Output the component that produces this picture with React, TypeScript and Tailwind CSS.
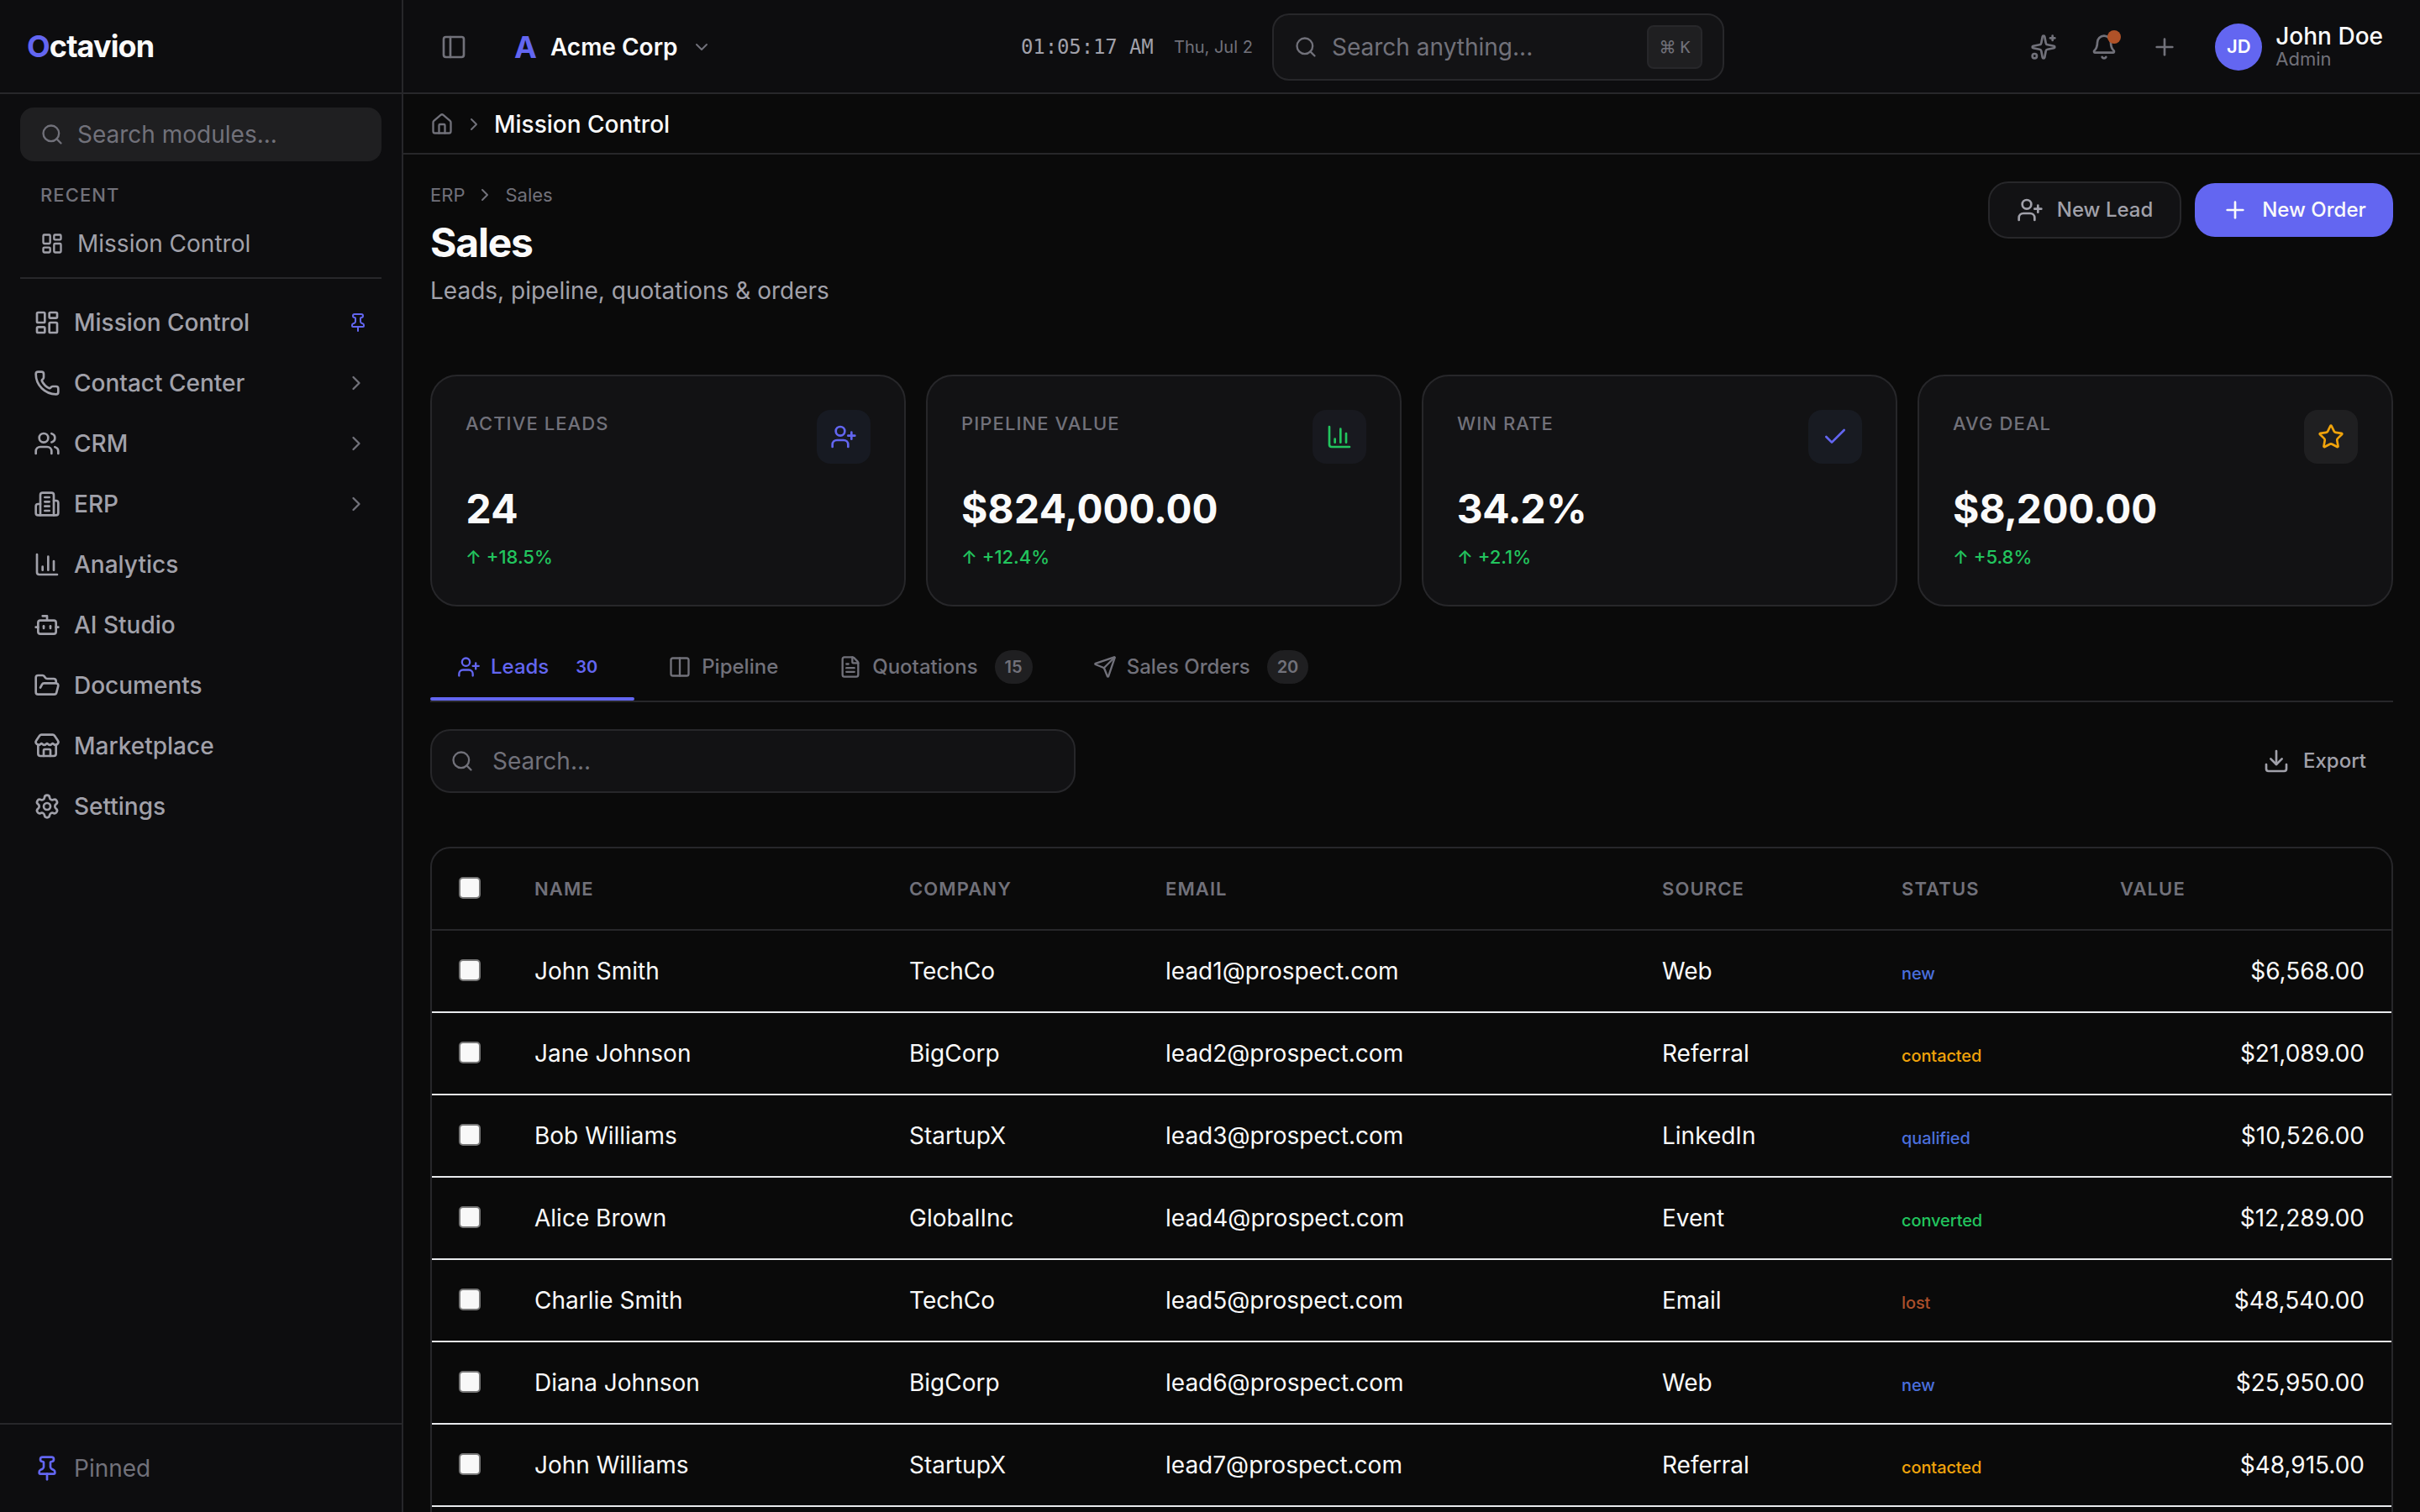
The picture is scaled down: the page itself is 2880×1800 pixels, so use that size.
import type { ReactNode } from "react";
import {
  Bell,
  Bot,
  ChartColumn,
  Check,
  ChevronDown,
  ChevronRight,
  Columns2,
  Download,
  FileText,
  FolderOpen,
  House,
  LayoutDashboard,
  PanelLeft,
  Phone,
  Pin,
  Plus,
  Search,
  Send,
  Settings,
  Sparkles,
  Star,
  Store,
  UserPlus,
  Users,
  type LucideIcon,
} from "lucide-react";

interface NavItem {
  label: string;
  icon: LucideIcon | typeof ErpIcon;
  expandable?: boolean;
  pinned?: boolean;
}

interface Stat {
  label: string;
  value: string;
  change: string;
  icon: LucideIcon;
  iconClass: string;
  tileClass: string;
}

interface Lead {
  name: string;
  company: string;
  email: string;
  source: string;
  status: keyof typeof statusColors;
  value: string;
}

const statusColors = {
  new: "text-[#4a6fdc]",
  contacted: "text-[#f0a30b]",
  qualified: "text-[#4a6fdc]",
  converted: "text-[#22c55e]",
  lost: "text-[#ac502b]",
};

function ErpIcon({ size = 24 }: { size?: number }) {
  return (
    <svg
      width={size}
      height={size}
      viewBox="0 0 24 24"
      fill="none"
      stroke="currentColor"
      strokeWidth={2}
      strokeLinecap="round"
      strokeLinejoin="round"
    >
      <path d="M6 22V4a2 2 0 0 1 2-2h8a2 2 0 0 1 2 2v18Z" />
      <path d="M6 12H4a2 2 0 0 0-2 2v6a2 2 0 0 0 2 2h2" />
      <path d="M18 9h2a2 2 0 0 1 2 2v9a2 2 0 0 1-2 2h-2" />
      <path d="M10 6h4M10 10h4M10 14h4M10 18h4" />
    </svg>
  );
}

const navItems: NavItem[] = [
  { label: "Mission Control", icon: LayoutDashboard, pinned: true },
  { label: "Contact Center", icon: Phone, expandable: true },
  { label: "CRM", icon: Users, expandable: true },
  { label: "ERP", icon: ErpIcon, expandable: true },
  { label: "Analytics", icon: ChartColumn },
  { label: "AI Studio", icon: Bot },
  { label: "Documents", icon: FolderOpen },
  { label: "Marketplace", icon: Store },
  { label: "Settings", icon: Settings },
];

const stats: Stat[] = [
  {
    label: "Active Leads",
    value: "24",
    change: "+18.5%",
    icon: UserPlus,
    iconClass: "text-[#6366f1]",
    tileClass: "bg-[#171a22]",
  },
  {
    label: "Pipeline Value",
    value: "$824,000.00",
    change: "+12.4%",
    icon: ChartColumn,
    iconClass: "text-[#22c55e]",
    tileClass: "bg-[#18191f]",
  },
  {
    label: "Win Rate",
    value: "34.2%",
    change: "+2.1%",
    icon: Check,
    iconClass: "text-[#6366f1]",
    tileClass: "bg-[#181b22]",
  },
  {
    label: "Avg Deal",
    value: "$8,200.00",
    change: "+5.8%",
    icon: Star,
    iconClass: "text-[#f0a30b]",
    tileClass: "bg-[#1f1f21]",
  },
];

const tabs = [
  { label: "Leads", icon: UserPlus, count: 30, active: true },
  { label: "Pipeline", icon: Columns2 },
  { label: "Quotations", icon: FileText, count: 15 },
  { label: "Sales Orders", icon: Send, count: 20 },
];

const leads: Lead[] = [
  { name: "John Smith", company: "TechCo", email: "lead1@prospect.com", source: "Web", status: "new", value: "$6,568.00" },
  { name: "Jane Johnson", company: "BigCorp", email: "lead2@prospect.com", source: "Referral", status: "contacted", value: "$21,089.00" },
  { name: "Bob Williams", company: "StartupX", email: "lead3@prospect.com", source: "LinkedIn", status: "qualified", value: "$10,526.00" },
  { name: "Alice Brown", company: "GlobalInc", email: "lead4@prospect.com", source: "Event", status: "converted", value: "$12,289.00" },
  { name: "Charlie Smith", company: "TechCo", email: "lead5@prospect.com", source: "Email", status: "lost", value: "$48,540.00" },
  { name: "Diana Johnson", company: "BigCorp", email: "lead6@prospect.com", source: "Web", status: "new", value: "$25,950.00" },
  { name: "John Williams", company: "StartupX", email: "lead7@prospect.com", source: "Referral", status: "contacted", value: "$48,915.00" },
];

const tableGrid =
  "grid grid-cols-[90px_446px_305px_591px_285px_260px_1fr] items-center";

function Sidebar() {
  return (
    <aside className="flex w-[480px] shrink-0 flex-col border-r-2 border-[#27272a] bg-[#0d0d0f]">
      <div className="flex h-28 shrink-0 items-center border-b-2 border-[#27272a] px-8">
        <span className="text-[36px] font-bold tracking-[-0.025em] text-[#fafafa]">
          <span className="text-[#6366f1]">O</span>ctavion
        </span>
      </div>

      <div className="px-6 pt-4">
        <div className="flex h-16 items-center gap-4 rounded-2xl bg-[#1f1f21] px-6 text-[28px] text-[#71717a]">
          <Search size={28} />
          Search modules...
        </div>
      </div>

      <div className="mx-6 border-b-2 border-[#27272a] pb-3">
        <p className="px-6 pt-[23px] text-[22px] font-medium leading-[34px] tracking-[0.05em] text-[#71717a]">
          RECENT
        </p>
        <div className="mt-[13px] flex h-14 items-center gap-4 px-6 text-[28px] text-[#a1a1aa]">
          <LayoutDashboard size={28} />
          Mission Control
        </div>
      </div>

      <nav className="flex flex-1 flex-col gap-2 px-6 pt-5">
        {navItems.map(({ label, icon: Icon, expandable, pinned }) => (
          <a
            key={label}
            className="flex h-16 items-center gap-4 px-4 text-[28px] font-medium text-[#a1a1aa]"
          >
            <Icon size={32} />
            <span className="flex-1">{label}</span>
            {pinned && <Pin size={24} className="text-[#6366f1]" />}
            {expandable && (
              <ChevronRight size={28} className="text-[#71717a]" />
            )}
          </a>
        ))}
      </nav>

      <div className="flex h-[106px] shrink-0 items-center gap-4 border-t-2 border-[#27272a] px-10 text-[28px] text-[#71717a]">
        <Pin size={32} className="text-[#6366f1]" />
        Pinned
      </div>
    </aside>
  );
}

function Topbar() {
  return (
    <header className="flex h-28 shrink-0 items-center border-b-2 border-[#27272a] bg-[#0d0d0f] pt-0.5 text-[#71717a]">
      <div className="flex w-[735px] items-center pl-11">
        <PanelLeft size={32} />
        <span className="ml-14 text-[36px] font-bold text-[#6366f1]">A</span>
        <span className="ml-4 text-[28px] font-semibold text-[#fafafa]">
          Acme Corp
        </span>
        <ChevronDown size={24} className="ml-4" />
      </div>

      <span className="w-[158px] whitespace-nowrap font-['DejaVu_Sans_Mono',monospace] text-[24px] tracking-[-0.005em] text-[#a1a1aa]">
        01:05:17 AM
      </span>
      <span className="ml-6 w-[93px] whitespace-nowrap text-[20px]">
        Thu, Jul 2
      </span>

      <div className="ml-6 flex h-20 w-[538px] items-center rounded-[20px] border-2 border-[#27272a] bg-[#131315] px-6 text-[28px]">
        <Search size={28} />
        <span className="ml-[17px] flex-1">Search anything...</span>
        <kbd className="flex h-[52px] w-[66px] items-center justify-center gap-[5px] rounded-lg border-2 border-[#27272a] bg-[#1f1f21] text-[20px]">
          <span className="font-[Inter,sans-serif]">⌘</span>
          <span className="font-['DejaVu_Sans_Mono',monospace]">K</span>
        </kbd>
      </div>

      <div className="ml-auto flex items-center gap-10 pr-11">
        <Sparkles size={32} />
        <div className="relative">
          <Bell size={32} />
          <span className="absolute -top-1 right-[-4px] size-4 rounded-full bg-[#b05228]" />
        </div>
        <Plus size={32} />
        <div className="ml-1 flex items-center gap-4">
          <span className="flex size-14 items-center justify-center rounded-full bg-[#6366f1] pb-0.5 text-[22px] font-semibold text-white">
            JD
          </span>
          <div className="pt-0.5">
            <p className="text-[28px] font-medium leading-[28px] text-[#fafafa]">
              John Doe
            </p>
            <p className="pb-0.5 text-[22px] leading-[26px]">Admin</p>
          </div>
        </div>
      </div>
    </header>
  );
}

function StatCard({ stat }: { stat: Stat }) {
  const Icon = stat.icon;

  return (
    <div className="flex h-[276px] flex-col rounded-[32px] border-2 border-[#27272a] bg-[#121214] p-10">
      <div className="flex h-[68px] items-start justify-between">
        <p className="text-[22px] font-medium uppercase leading-[32px] tracking-[0.05em] text-[#71717a]">
          {stat.label}
        </p>
        <span
          className={`flex size-16 items-center justify-center rounded-2xl ${stat.tileClass}`}
        >
          <Icon size={32} className={stat.iconClass} />
        </span>
      </div>
      <p className="mt-[25px] text-[48px] font-bold leading-[58px] text-[#fafafa] tabular-nums">
        {stat.value}
      </p>
      <p className="mt-[11px] text-[22px] font-medium leading-[34px] text-[#22c55e]">
        ↑ {stat.change}
      </p>
    </div>
  );
}

function Checkbox() {
  return (
    <span className="mb-0.5 block size-[26px] rounded-[5px] border-2 border-[#767676] bg-[#f8f8f8]" />
  );
}

function HeaderCell({ children }: { children: ReactNode }) {
  return <span className="uppercase">{children}</span>;
}

function LeadsTable() {
  return (
    <div className="mt-16 overflow-hidden rounded-[24px] border-2 border-[#27272a] pb-24">
      <div
        className={`${tableGrid} h-[98px] border-b-2 border-[#27272a] px-8 text-[22px] font-semibold tracking-[0.05em] text-[#71717a]`}
      >
        <Checkbox />
        <HeaderCell>Name</HeaderCell>
        <HeaderCell>Company</HeaderCell>
        <HeaderCell>Email</HeaderCell>
        <HeaderCell>Source</HeaderCell>
        <HeaderCell>Status</HeaderCell>
        <HeaderCell>Value</HeaderCell>
      </div>

      {leads.map((lead) => (
        <div
          key={lead.email}
          className={`${tableGrid} h-[98px] border-b-2 border-[#e8eaed] px-8 text-[28px] text-[#fafafa]`}
        >
          <Checkbox />
          <span>{lead.name}</span>
          <span>{lead.company}</span>
          <span>{lead.email}</span>
          <span>{lead.source}</span>
          <span
            className={`pt-1.5 text-[20px] font-medium tracking-[-0.005em] ${statusColors[lead.status]}`}
          >
            {lead.status}
          </span>
          <span className="text-right">{lead.value}</span>
        </div>
      ))}
    </div>
  );
}

export default function App() {
  return (
    <div className="flex h-[1800px] w-[2880px] overflow-hidden bg-[#0a0a0a] font-[Inter,sans-serif] text-[#fafafa]">
      <Sidebar />

      <div className="flex min-w-0 flex-1 flex-col">
        <Topbar />

        <div className="flex h-[72px] shrink-0 items-center border-b-2 border-[#27272a] pl-8 pt-0.5 text-[#71717a]">
          <House size={28} />
          <ChevronRight size={24} className="ml-3" />
          <span className="ml-3 text-[28px] font-medium text-[#fafafa]">
            Mission Control
          </span>
        </div>

        <main className="min-h-0 flex-1 overflow-hidden px-8 pt-8">
          <div className="flex h-[230px] items-start justify-between">
            <div>
              <div className="flex h-8 items-center text-[22px] text-[#71717a]">
                ERP
                <ChevronRight size={24} className="mx-3" />
                Sales
              </div>
              <h1 className="mt-[9px] text-[48px] font-bold leading-[64px] tracking-[-0.025em]">
                Sales
              </h1>
              <p className="mt-1 text-[28px] leading-[42px] text-[#a1a1aa]">
                Leads, pipeline, quotations &amp; orders
              </p>
            </div>

            <div className="flex items-center gap-4 text-[24px] font-medium">
              <button className="flex h-[68px] w-[230px] items-center justify-center gap-4 rounded-[24px] border-2 border-[#27272a] bg-[#121214] text-[#a1a1aa]">
                <UserPlus size={32} />
                New Lead
              </button>
              <button className="flex h-16 w-[236px] items-center justify-center gap-4 rounded-[24px] bg-[#6366f1] text-[#fafafa]">
                <Plus size={32} />
                New Order
              </button>
            </div>
          </div>

          <div className="grid grid-cols-4 gap-6">
            {stats.map((stat) => (
              <StatCard key={stat.label} stat={stat} />
            ))}
          </div>

          <div className="mt-8 flex h-[82px] gap-2 border-b-2 border-[#27272a]">
            {tabs.map(({ label, icon: Icon, count, active }) => (
              <div
                key={label}
                className={`relative flex items-center px-8 text-[24px] font-medium ${
                  active ? "text-[#6366f1]" : "text-[#71717a]"
                }`}
              >
                <Icon size={28} />
                <span className="ml-3">{label}</span>
                {count && (
                  <span
                    className={`ml-5 flex h-10 items-center rounded-full px-3 text-[20px] font-semibold ${
                      active ? "" : "bg-[#1f1f21]"
                    }`}
                  >
                    {count}
                  </span>
                )}
                {active && (
                  <span className="absolute inset-x-0 bottom-0 h-1 rounded-full bg-[#6366f1]" />
                )}
              </div>
            ))}
          </div>

          <div className="mt-8 flex items-center justify-between">
            <div className="flex h-[76px] w-[768px] items-center gap-[22px] rounded-[24px] border-2 border-[#27272a] bg-[#121214] px-[22px] text-[28px] text-[#71717a]">
              <Search size={28} />
              Search...
            </div>
            <button className="flex items-center gap-4 pr-8 text-[24px] font-medium text-[#a1a1aa]">
              <Download size={32} />
              Export
            </button>
          </div>

          <LeadsTable />
        </main>
      </div>
    </div>
  );
}
